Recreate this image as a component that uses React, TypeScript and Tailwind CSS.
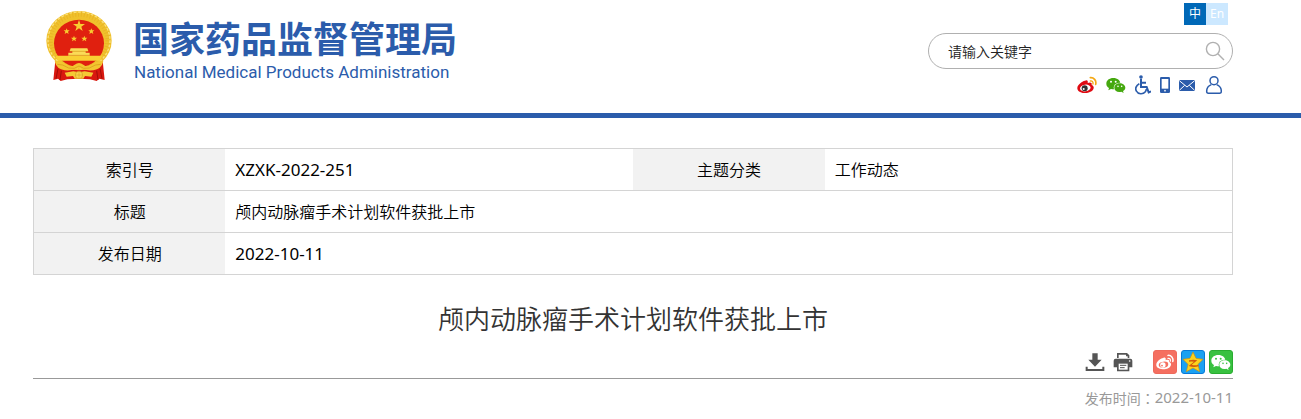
import React, { useState } from 'react';

const FONT = 'font-["Noto_Sans","Noto_Sans_CJK_SC",sans-serif]';

function Emblem() {
  return (
    <svg viewBox="45 30 204 216" className="h-[72px] w-[68px] shrink-0" role="img" aria-label="国徽">
      {/* red ribbon */}
      <path d="M76 182 L70 240 L84 236 L92 243 L112 238 L147 236 L180 238 L200 243 L208 236 L224 240 L218 182 Z" fill="#d9180f" />
      <path d="M84 206 L78 236 M94 212 L90 240 M200 212 L204 240 M210 206 L216 236" stroke="#a30d08" strokeWidth="3" fill="none" />
      {/* wheat ring */}
      <ellipse cx="147" cy="122" rx="98" ry="89" fill="#f0c12c" />
      <ellipse cx="147" cy="121" rx="87" ry="79" fill="none" stroke="#dfa31c" strokeWidth="16" strokeDasharray="3 6" opacity="0.4" />
      <ellipse cx="147" cy="121" rx="93" ry="85" fill="none" stroke="#fbe07a" strokeWidth="4" strokeDasharray="8 5" />
      <ellipse cx="147" cy="130" rx="75" ry="71" fill="#e0200f" />
      {/* gate */}
      <path d="M77 167 H217 L211 182 H83 Z" fill="#f9cf33" />
      <path d="M122 145 H172 L175 153 H119 Z M127 153 H167 V158 H179 V167 H115 V158 H127 Z" fill="#fbdb57" />
      <path d="M119 154 H175 M115 166 H179" stroke="#d99a1b" strokeWidth="2" />
      {/* stars */}
      <path d="M147 59 L151 72 L165 72 L154 80 L158 93 L147 85 L136 93 L140 80 L129 72 L143 72 Z" fill="#f8cc31" />
      {[[110, 94], [184, 94], [132, 116], [163, 116]].map(([x, y]) => (
        <path key={x} transform={`translate(${x} ${y})`} d="M0 -9 L2.4 -3 L9 -3 L4 1.5 L6 8 L0 4 L-6 8 L-4 1.5 L-9 -3 L-2.4 -3 Z" fill="#f8cc31" />
      ))}
      {/* drapes and gear */}
      <path d="M74 184 Q92 180 112 196 Q124 203 134 194 Q147 184 160 194 Q170 203 182 196 Q202 180 220 184 Q214 208 190 211 Q166 213 147 205 Q128 213 104 211 Q80 208 74 184 Z" fill="#f3c630" />
      <path d="M82 193 Q98 192 116 204 Q134 209 147 198 Q160 209 178 204 Q196 192 212 193" fill="none" stroke="#d9a01c" strokeWidth="2.5" />
      <path d="M104 218 L130 214 L147 217 L164 214 L190 218 L184 230 L165 228 L160 236 H134 L129 228 L110 230 Z" fill="#f5ca34" />
      <circle cx="147" cy="225" r="11" fill="#f8d44a" stroke="#c98a12" strokeWidth="1.5" />
      <path d="M138 225 H156 M147 216 V234" stroke="#d99a1b" strokeWidth="1.5" />
    </svg>
  );
}

function WeiboIcon({ className, body, wave, hole, eye }: { className: string; body: string; wave: string; hole: string; eye: string }) {
  return (
    <svg viewBox="0 0 60 60" className={className}>
      <path d="M24 17 C30 13 34 17 32 24 C39 21 46 22 44 30 C49 32 51 36 50 40 C47 51 33 55 22 54 C9 53 0 47 1 38 C2 29 14 19 24 17 Z" fill={body} />
      <ellipse cx="25" cy="39" rx="16" ry="10" transform="rotate(-8 25 39)" fill={hole} />
      <circle cx="23" cy="40" r="9" fill={eye} />
      <circle cx="20" cy="42" r="3" fill={hole} />
      <path d="M40 8 C50 7 59 16 56 28" fill="none" stroke={wave} strokeWidth="5" strokeLinecap="round" />
      <path d="M40 18 C46 17 49 21 48 27" fill="none" stroke={wave} strokeWidth="4" strokeLinecap="round" />
    </svg>
  );
}

function WechatIcon({ className, fill, gap }: { className: string; fill: string; gap: string }) {
  return (
    <svg viewBox="0 0 60 60" className={className}>
      <path d="M22 9 C10 9 1 16 1 26 C1 32 4 36 9 39 L7 46 L15 42 C32 46 43 37 43 26 C43 16 34 9 22 9 Z" fill={fill} />
      <ellipse cx="41" cy="38" rx="18" ry="15" fill={gap} />
      <path d="M41 25 C32 25 25 31 25 38 C25 47 34 53 46 50 L53 54 L51 48 C55 46 58 42 58 38 C58 31 50 25 41 25 Z" fill={fill} />
      <circle cx="15" cy="20" r="3" fill={gap} />
      <circle cx="29" cy="20" r="3" fill={gap} />
      <circle cx="36" cy="34" r="2.4" fill={gap} />
      <circle cx="47" cy="34" r="2.4" fill={gap} />
    </svg>
  );
}

function QuickLinks() {
  return (
    <nav className="flex h-5 items-center gap-[9px] pr-[11px]">
      <a href="#weibo" aria-label="微博">
        <WeiboIcon className="size-5" body="#e00a12" wave="#f5a814" hole="#ffffff" eye="#333333" />
      </a>
      <a href="#wechat" aria-label="微信">
        <WechatIcon className="size-5" fill="#45a80f" gap="#ffffff" />
      </a>
      <a href="#accessible" aria-label="无障碍">
        <svg viewBox="0 0 48 60" className="h-5 w-4" fill="none" stroke="#2b5cab" strokeWidth="5">
          <circle cx="18" cy="6" r="5.5" fill="#2b5cab" stroke="none" />
          <path d="M18 11 V36 H35 L41 52 L48 49 M19 23 H33" strokeWidth="6" />
          <path d="M13 26 C3 31 0 41 4 48 C9 58 24 59 31 50 C33 47 34 45 34 42" />
        </svg>
      </a>
      <a href="#mobile" aria-label="手机版">
        <svg viewBox="0 0 30 60" className="h-5 w-[10px]">
          <rect x="0" y="6" width="30" height="48" rx="4" fill="#2b5cab" />
          <rect x="5" y="12" width="20" height="29" fill="#fff" />
          <circle cx="15" cy="47" r="2.5" fill="#fff" />
        </svg>
      </a>
      <a href="#mail" aria-label="邮箱">
        <svg viewBox="0 0 48 60" className="h-5 w-4">
          <rect x="0" y="15" width="48" height="33" rx="2" fill="#2b5cab" />
          <path d="M1 17 L24 36 L47 17 M1 46 L17 31 M47 46 L31 31" fill="none" stroke="#fff" strokeWidth="3" />
        </svg>
      </a>
      <a href="#user" aria-label="用户">
        <svg viewBox="0 0 54 60" className="h-5 w-[18px]" fill="none" stroke="#2b5cab" strokeWidth="4.5">
          <circle cx="30" cy="17" r="12" />
          <path d="M22 29 C12 33 8 40 8 49 C8 53 10 55 13 55 H47 C50 55 52 53 52 49 C52 40 48 33 38 29" />
        </svg>
      </a>
    </nav>
  );
}

function Header() {
  const [keyword, setKeyword] = useState('');

  return (
    <header className="border-b-[5px] border-[#2b5cab]">
      <div className="flex h-[113px] max-w-[1301px] justify-between pr-[68px] pl-[45px]">
        <a href="#home" className="flex items-start gap-5 pt-[10px] text-[#2b5cab]">
          <Emblem />
          <span className="flex flex-col pt-1">
            <span className="font-['Noto_Sans_CJK_SC',sans-serif] text-[36px] leading-[46px] font-bold whitespace-nowrap">国家药品监督管理局</span>
            <span className="pl-px font-[Roboto,sans-serif] text-[17px] leading-6 whitespace-nowrap">National Medical Products Administration</span>
          </span>
        </a>
        <div className="flex flex-col items-end pt-[3px]">
          <div className="flex pr-[5px] text-xs text-white">
            <a href="#zh" className="flex size-[22px] items-center justify-center bg-[#0068b7]">中</a>
            <a href="#en" className="flex size-[22px] items-center justify-center bg-[#cce8ff]">En</a>
          </div>
          <form className="mt-2 mb-[6px] flex h-9 w-[305px] items-center rounded-full border border-[#b0b0b0] pr-[7px] pl-[19px]">
            <input
              type="text"
              aria-label="请输入关键字"
              placeholder="请输入关键字"
              value={keyword}
              onChange={(e) => setKeyword(e.target.value)}
              className="min-w-0 flex-1 font-['Noto_Sans_CJK_SC',sans-serif] text-sm font-[350] text-black placeholder-[#222] outline-none"
            />
            <button type="button" aria-label="搜索">
              <svg viewBox="0 0 20 20" className="size-5" fill="none" stroke="#b0b0b0" strokeWidth="1.4">
                <circle cx="8" cy="8" r="6.6" />
                <path d="M12.8 12.8 L19 19" />
              </svg>
            </button>
          </form>
          <QuickLinks />
        </div>
      </div>
    </header>
  );
}

function InfoTable() {
  const label = 'h-[42px] w-[16%] bg-[#f2f2f2] text-center font-[350]';
  const value = 'px-[10px]';

  return (
    <table className="w-full table-fixed border-collapse border border-[#d4d4d4] text-base leading-6 font-[350] text-black">
      <tbody>
        <tr className="border-b border-[#d4d4d4]">
          <th scope="row" className={label}>索引号</th>
          <td className={`${value} w-[34%] text-[17px] font-normal`}>XZXK-2022-251</td>
          <th scope="row" className={label}>主题分类</th>
          <td className={`${value} w-[34%]`}>工作动态</td>
        </tr>
        <tr className="border-b border-[#d4d4d4]">
          <th scope="row" className={label}>标题</th>
          <td colSpan={3} className={value}>颅内动脉瘤手术计划软件获批上市</td>
        </tr>
        <tr>
          <th scope="row" className={label}>发布日期</th>
          <td colSpan={3} className={`${value} text-[17px] font-normal`}>2022-10-11</td>
        </tr>
      </tbody>
    </table>
  );
}

function ArticleTools() {
  return (
    <div className="flex items-center justify-end border-b border-[#999] pb-1">
      <button type="button" aria-label="下载" className="mr-2">
        <svg viewBox="0 0 60 60" className="size-5" fill="#555">
          <path d="M22 4 H38 V23 H50 L30 44 L10 23 H22 Z" />
          <path d="M2 44 H8 V51 H52 V44 H58 V57 H2 Z" />
        </svg>
      </button>
      <button type="button" aria-label="打印" className="mr-5">
        <svg viewBox="0 0 60 60" className="size-5">
          <path d="M12 18 V3 H42 L49 10 V18 Z" fill="#555" />
          <path d="M17 18 V8 H39 V13 H44 V18 Z" fill="#fff" />
          <path d="M8 20 H52 Q58 20 58 26 V46 H49 V58 H12 V46 H2 V26 Q2 20 8 20 Z" fill="#555" />
          <rect x="17" y="35" width="27" height="18" fill="#fff" />
          <path d="M21 40 H40 M21 47 H35" stroke="#555" strokeWidth="3" />
          <circle cx="50" cy="27" r="2.5" fill="#fff" />
        </svg>
      </button>
      <div className="flex gap-1">
        <a href="#share-weibo" aria-label="分享到微博" className="flex size-6 items-center justify-center rounded-[3px] border border-[#ee6a5c] bg-[#f56f60]">
          <WeiboIcon className="size-[18px]" body="#ffffff" wave="#ffffff" hole="#f56f60" eye="#ffffff" />
        </a>
        <a href="#share-qzone" aria-label="分享到QQ空间" className="flex size-6 items-center justify-center rounded-[3px] border border-[#0779d8] bg-[#1ba1f2]">
          <svg viewBox="0 0 66 66" className="size-[22px] shrink-0">
            <path d="M33 3 L42 22 L63 25 L48 40 L53 62 L33 51 L13 62 L18 40 L3 25 L24 22 Z" fill="#fcd21c" stroke="#c88c14" strokeWidth="2" strokeLinejoin="round" />
            <path d="M21 28 Q34 24 46 28 L29 41 Q39 44 49 41 L50 46 Q35 51 20 45 L36 32 Q28 31 21 32 Z" fill="#d4590a" />
          </svg>
        </a>
        <a href="#share-wechat" aria-label="分享到微信" className="flex size-6 items-center justify-center rounded-[3px] border border-[#29ac30] bg-[#38c140]">
          <WechatIcon className="size-5" fill="#ffffff" gap="#38c140" />
        </a>
      </div>
    </div>
  );
}

export default function App() {
  return (
    <div className={`${FONT} min-h-screen bg-white`}>
      <Header />
      <main className="max-w-[1301px] pt-[30px] pr-[68px] pl-[33px]">
        <InfoTable />
        <h1 className="pt-6 text-center font-['Noto_Sans_CJK_SC',sans-serif] text-[26px] leading-[38px] font-[350] text-[#333]">颅内动脉瘤手术计划软件获批上市</h1>
        <div className="pt-[13px]">
          <ArticleTools />
        </div>
        <p className="flex items-start justify-end pt-2 text-[#999]">
          <span className="text-sm leading-[22px]">
            发布时间<span className="font-['Noto_Sans_CJK_TC',sans-serif]">：</span>
          </span>
          <time className="text-[15px] leading-5">2022-10-11</time>
        </p>
      </main>
    </div>
  );
}
